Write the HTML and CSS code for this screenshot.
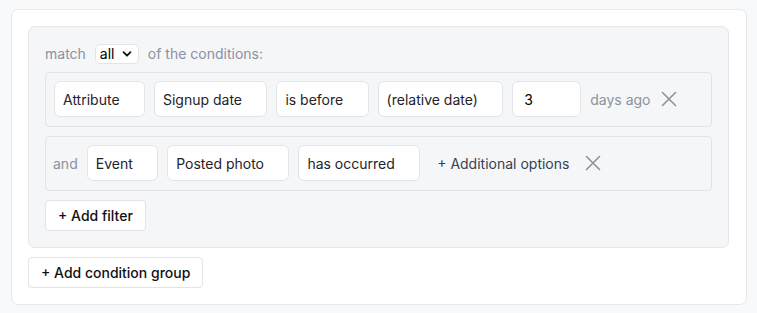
FILE: index.html
```html
<!DOCTYPE html>
<html lang="en">
<head>
    <meta charset="UTF-8">
    <meta name="viewport" content="width=device-width, initial-scale=1.0">
    <title>Conditions</title>
    <link rel="stylesheet" href="styles.css">
</head>
<body>
    <div class="card">
        <div class="group">
            <div class="match">
                match
                <span class="pick">all
                    <svg width="10" height="10" viewBox="0 0 10 10"><path d="M1.5 3.2 5 6.7 8.5 3.2" fill="none" stroke="#111" stroke-width="1.8" stroke-linecap="round" stroke-linejoin="round"/></svg>
                </span>
                of the conditions:
            </div>

            <div class="filter">
                <span class="box">Attribute</span>
                <span class="box">Signup date</span>
                <span class="box">is before</span>
                <span class="box">(relative date)</span>
                <span class="box num">3</span>
                <span class="muted">days ago</span>
                <svg class="close" width="16" height="16" viewBox="0 0 16 16"><path d="M1.5 1.5 14.5 14.5M14.5 1.5 1.5 14.5" stroke="#8b93a1" stroke-width="1.6" stroke-linecap="round"/></svg>
            </div>

            <div class="filter">
                <span class="muted and">and</span>
                <span class="box">Event</span>
                <span class="box">Posted photo</span>
                <span class="box">has occurred</span>
                <span class="extra">+ Additional options</span>
                <svg class="close" width="16" height="16" viewBox="0 0 16 16"><path d="M1.5 1.5 14.5 14.5M14.5 1.5 1.5 14.5" stroke="#8b93a1" stroke-width="1.6" stroke-linecap="round"/></svg>
            </div>

            <button class="btn">+ Add filter</button>
        </div>
        <button class="btn">+ Add condition group</button>
    </div>
</body>
</html>
```

FILE: styles.css
```css
body {
    margin: 0;
    padding: 9px 10px 10px 11px;
    background-color: #f8f9fb;
    font-family: Inter, "Noto Sans", sans-serif;
    font-size: 14px;
    color: #111827;
}
.card {
    background: #fff;
    border: 1px solid #e6e8ec;
    border-radius: 7px;
    padding: 16px 17px 16px 16px;
    display: flex;
    flex-direction: column;
    align-items: flex-start;
    gap: 9px;
}
.group {
    align-self: stretch;
    background: #f5f6f8;
    border: 1px solid #e4e6ea;
    border-radius: 7px;
    padding: 17px 16px 16px 16px;
    display: flex;
    flex-direction: column;
    align-items: flex-start;
    gap: 9px;
}
.match {
    display: flex;
    align-items: center;
    gap: 9px;
    color: #8a92a1;
    height: 19px;
}
.pick {
    display: inline-flex;
    align-items: center;
    justify-content: space-between;
    width: 44px;
    height: 20px;
    box-sizing: border-box;
    padding: 0 6px 0 4px;
    background: #fff;
    border: 1px solid #e2e4e8;
    border-radius: 5px;
    color: #000;
}
.filter {
    align-self: stretch;
    display: flex;
    align-items: center;
    gap: 9px;
    padding: 8px 8px 9px 8px;
    border: 1px solid #e0e4e2;
    border-radius: 4px;
}
.box {
    display: inline-flex;
    align-items: center;
    height: 36px;
    box-sizing: border-box;
    padding: 0 24.4px 0 8px;
    background: #fff;
    border: 1px solid #e3e5e9;
    border-radius: 6px;
    color: #1f2328;
}
.num {
    width: 69px;
    padding-left: 11px;
    color: #000;
}
.muted {
    color: #8a92a1;
}
.and {
    margin-left: -1px;
}
.extra {
    color: #374151;
    margin-left: 8px;
    margin-right: 5px;
}
.close {
    margin-left: 2px;
}
.btn {
    height: 31px;
    padding: 0 12px;
    background: #fff;
    border: 1px solid #e2e4e8;
    border-radius: 4px;
    font-family: inherit;
    font-size: 14px;
    font-weight: 500;
    color: #111;
}
```
